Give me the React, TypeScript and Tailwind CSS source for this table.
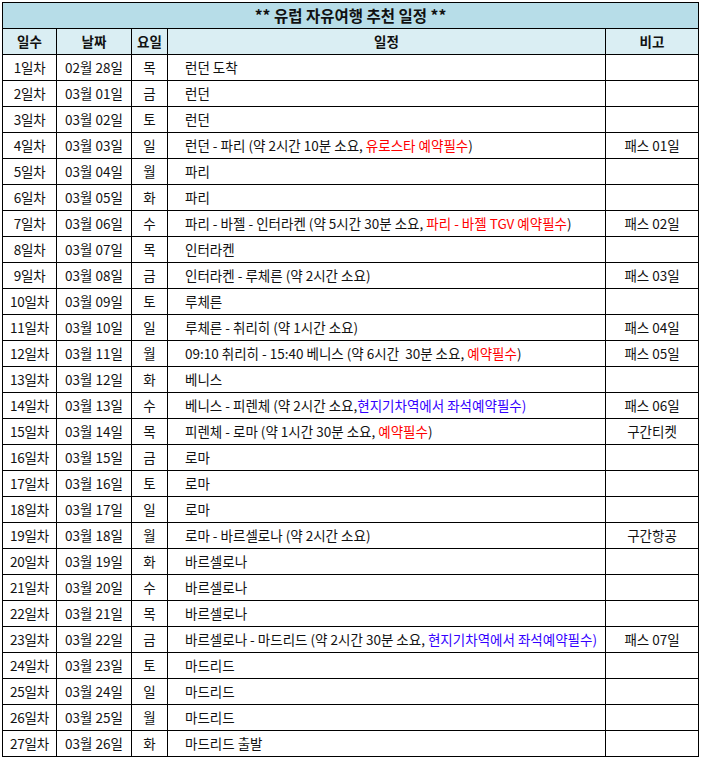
import React from "react";

type Row = { d: string; date: string; w: string; plan: React.ReactNode; note?: string };

const R = ({ children }: { children: React.ReactNode }) => <span className="text-[#ff0000]">{children}</span>;
const B = ({ children }: { children: React.ReactNode }) => <span className="text-[#3300ff]">{children}</span>;

const rows: Row[] = [
  { d: "1일차", date: "02월 28일", w: "목", plan: "런던 도착" },
  { d: "2일차", date: "03월 01일", w: "금", plan: "런던" },
  { d: "3일차", date: "03월 02일", w: "토", plan: "런던" },
  { d: "4일차", date: "03월 03일", w: "일", plan: <>런던 - 파리 (약 2시간 10분 소요, <R>유로스타 예약필수</R>)</>, note: "패스 01일" },
  { d: "5일차", date: "03월 04일", w: "월", plan: "파리" },
  { d: "6일차", date: "03월 05일", w: "화", plan: "파리" },
  { d: "7일차", date: "03월 06일", w: "수", plan: <>파리 - 바젤 - 인터라켄 (약 5시간 30분 소요, <R>파리 - 바젤 TGV 예약필수</R>)</>, note: "패스 02일" },
  { d: "8일차", date: "03월 07일", w: "목", plan: "인터라켄" },
  { d: "9일차", date: "03월 08일", w: "금", plan: "인터라켄 - 루체른 (약 2시간 소요)", note: "패스 03일" },
  { d: "10일차", date: "03월 09일", w: "토", plan: "루체른" },
  { d: "11일차", date: "03월 10일", w: "일", plan: "루체른 - 취리히 (약 1시간 소요)", note: "패스 04일" },
  { d: "12일차", date: "03월 11일", w: "월", plan: <>09:10 취리히 - 15:40 베니스 (약 6시간  30분 소요, <R>예약필수</R>)</>, note: "패스 05일" },
  { d: "13일차", date: "03월 12일", w: "화", plan: "베니스" },
  { d: "14일차", date: "03월 13일", w: "수", plan: <>베니스 - 피렌체 (약 2시간 소요,<B>현지기차역에서 좌석예약필수)</B></>, note: "패스 06일" },
  { d: "15일차", date: "03월 14일", w: "목", plan: <>피렌체 - 로마 (약 1시간 30분 소요, <R>예약필수</R>)</>, note: "구간티켓" },
  { d: "16일차", date: "03월 15일", w: "금", plan: "로마" },
  { d: "17일차", date: "03월 16일", w: "토", plan: "로마" },
  { d: "18일차", date: "03월 17일", w: "일", plan: "로마" },
  { d: "19일차", date: "03월 18일", w: "월", plan: "로마 - 바르셀로나 (약 2시간 소요)", note: "구간항공" },
  { d: "20일차", date: "03월 19일", w: "화", plan: "바르셀로나" },
  { d: "21일차", date: "03월 20일", w: "수", plan: "바르셀로나" },
  { d: "22일차", date: "03월 21일", w: "목", plan: "바르셀로나" },
  { d: "23일차", date: "03월 22일", w: "금", plan: <>바르셀로나 - 마드리드 (약 2시간 30분 소요, <B>현지기차역에서 좌석예약필수)</B></>, note: "패스 07일" },
  { d: "24일차", date: "03월 23일", w: "토", plan: "마드리드" },
  { d: "25일차", date: "03월 24일", w: "일", plan: "마드리드" },
  { d: "26일차", date: "03월 25일", w: "월", plan: "마드리드" },
  { d: "27일차", date: "03월 26일", w: "화", plan: "마드리드 출발" },
];

export default function App() {
  const font = { fontFamily: '"Noto Sans CJK KR", "Noto Sans", sans-serif' };
  return (
    <div className="bg-white w-[703px] h-[761px] pt-[2px] pl-[2px]" style={font}>
      <table className="table-fixed border-collapse w-[696px] text-[13.5px] leading-none text-[#111]">
        <colgroup>
          <col className="w-[54px]" />
          <col className="w-[75px]" />
          <col className="w-[36px]" />
          <col className="w-[438px]" />
          <col className="w-[93px]" />
        </colgroup>
        <thead>
          <tr className="h-[26px] bg-[#b7dde8]">
            <th colSpan={5} className="border border-black text-[15.5px] font-bold text-center p-0">
              ** 유럽 자유여행 추천 일정 **
            </th>
          </tr>
          <tr className="h-[26px] bg-[#daeef3]">
            <th className="border border-black font-bold text-center p-0">일수</th>
            <th className="border border-black font-bold text-center p-0">날짜</th>
            <th className="border border-black font-bold text-center p-0">요일</th>
            <th className="border border-black font-bold text-center p-0">일정</th>
            <th className="border border-black font-bold text-center p-0">비고</th>
          </tr>
        </thead>
        <tbody>
          {rows.map((r) => (
            <tr key={r.d} className="h-[26px]">
              <td className="border border-black text-center p-0 whitespace-nowrap tracking-[-0.2px]">{r.d}</td>
              <td className="border border-black text-center p-0 whitespace-nowrap">{r.date}</td>
              <td className="border border-black text-center p-0">{r.w}</td>
              <td className="border border-black p-0 pl-[17px] whitespace-pre">{r.plan}</td>
              <td className="border border-black text-center p-0 whitespace-nowrap">{r.note ?? ""}</td>
            </tr>
          ))}
        </tbody>
      </table>
    </div>
  );
}
